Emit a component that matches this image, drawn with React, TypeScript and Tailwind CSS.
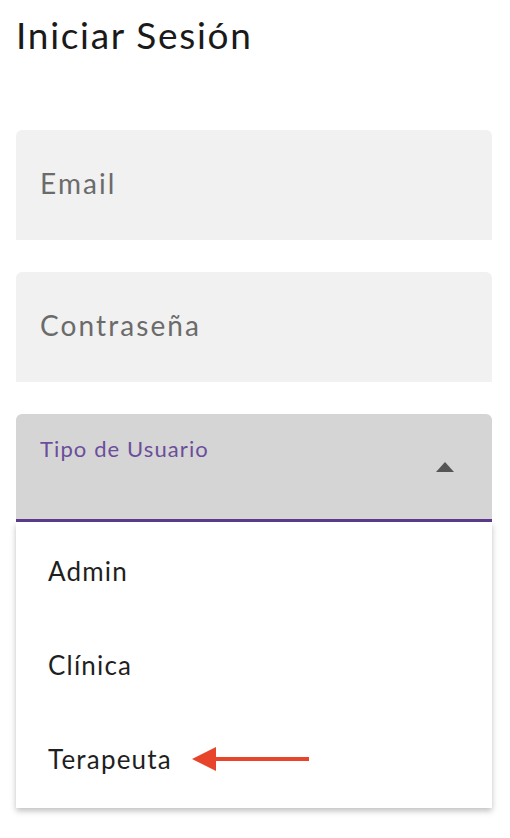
import React from 'react';

const options = ['Admin', 'Clínica', 'Terapeuta'];

export default function App() {
  return (
    <div className="min-h-[838px] w-[510px] bg-white font-['Lato',sans-serif]">
      <div className="pl-4 pr-[18px] pt-[12px]">
        <h1 className="text-[37px] leading-[46px] tracking-[1.7px] text-[#1a1a1a]">Iniciar Sesión</h1>

        {/* Email */}
        <div className="mt-[72px] h-[110px] rounded-t-md bg-[#f1f1f1] px-6 flex items-center">
          <span className="text-[28px] tracking-[2.1px] text-[#6b6b6b] -mt-1">Email</span>
        </div>

        {/* Password */}
        <div className="mt-8 h-[110px] rounded-t-md bg-[#f1f1f1] px-6 flex items-center">
          <span className="text-[28px] tracking-[2.1px] text-[#6b6b6b] -mt-1">Contraseña</span>
        </div>

        {/* Select */}
        <div className="relative mt-8">
          <div className="h-[108px] rounded-t-md bg-[#d5d5d5] border-b-[3px] border-[#5b3a8a] px-6 pt-[18px] relative">
            <span className="text-[22px] tracking-[1.1px] text-[#6b4e9b]">Tipo de Usuario</span>
            <svg className="absolute right-[38px] top-[48px]" width="18" height="10" viewBox="0 0 18 10">
              <polygon points="9,0 18,10 0,10" fill="#555" />
            </svg>
          </div>
          <div className="bg-white shadow-[0_3px_6px_rgba(0,0,0,0.25)] pt-[2px] pb-[2px]">
            {options.map((o) => (
              <div key={o} className="h-[94px] flex items-center px-8">
                <span className="text-[26px] tracking-[1.2px] text-[#1f1f1f]">{o}</span>
                {o === 'Terapeuta' && (
                  <svg className="ml-5" width="118" height="26" viewBox="0 0 118 26">
                    <line x1="20" y1="13" x2="117" y2="13" stroke="#e8432b" strokeWidth="4" />
                    <polygon points="0,13 24,1 24,25" fill="#e8432b" />
                  </svg>
                )}
              </div>
            ))}
          </div>
        </div>
      </div>
    </div>
  );
}
